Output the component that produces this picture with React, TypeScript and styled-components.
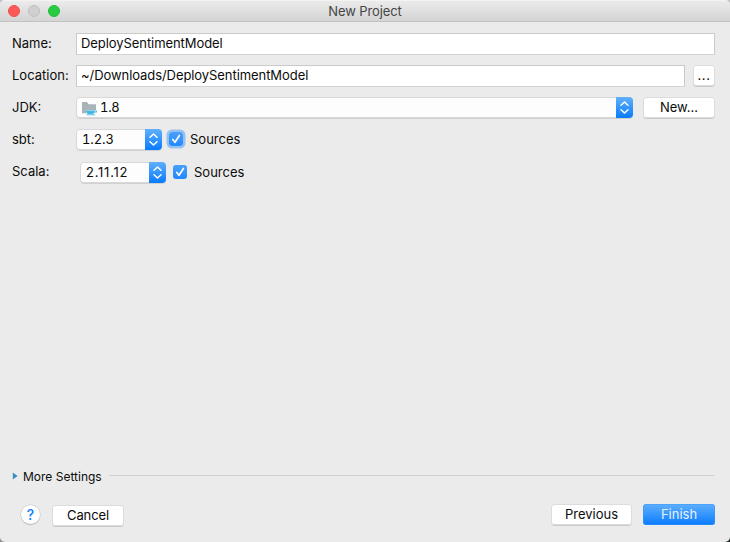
import React from 'react';
import styled, { createGlobalStyle, css } from 'styled-components';

const GlobalStyle = createGlobalStyle`
  * { box-sizing: border-box; }
  html, body { margin: 0; padding: 0; overflow: hidden; }
  body {
    background: linear-gradient(#c4c4c4 0 50%, transparent 50%),
      linear-gradient(90deg, #8c8c8c 50%, #1d2421 50%);
    font-family: Inter, 'Liberation Sans', sans-serif;
    font-size: 13px;
    color: #0c0c0c;
  }
`;

const Window = styled.main`
  width: 730px;
  height: 542px;
  display: flex;
  flex-direction: column;
  background: #ebebeb;
  border-radius: 5px;
  overflow: hidden;
`;

const TitleBar = styled.header`
  height: 22px;
  flex: none;
  display: grid;
  grid-template-columns: 80px 1fr 80px;
  align-items: center;
  background: linear-gradient(#ebebeb, #d4d4d4);
  border-top: 1px solid #f3f3f3;
  border-bottom: 1px solid #c3c3c3;
`;

const Lights = styled.div`
  display: flex;
  gap: 8px;
  padding-left: 8px;
`;

const Light = styled.span<{ $fill: string; $edge: string }>`
  width: 12px;
  height: 12px;
  border-radius: 50%;
  background: ${(p) => p.$fill};
  border: 1px solid ${(p) => p.$edge};
`;

const Title = styled.h1`
  margin: 0;
  text-align: center;
  font-size: 13px;
  line-height: 20px;
  font-weight: 400;
  letter-spacing: -0.1px;
  color: #454545;
`;

const Form = styled.section`
  flex: 1;
  display: flex;
  flex-direction: column;
  gap: 10px;
  padding: 11px 15px 0 12px;
`;

const Row = styled.div<{ $drop?: number }>`
  display: flex;
  align-items: flex-start;
  height: 22px;
  margin-top: ${(p) => p.$drop ?? 0}px;
`;

const Label = styled.label<{ $width?: number; $lift?: number }>`
  width: ${(p) => p.$width ?? 64}px;
  flex: none;
  line-height: 20px;
  white-space: nowrap;
  margin-top: ${(p) => -(p.$lift ?? 0)}px;
`;

const TextField = styled.div`
  flex: 1;
  height: 22px;
  padding: 0 4px;
  line-height: 19px;
  background: #fff;
  border: 1px solid #cacaca;
  border-bottom-color: #d4d4d4;
  letter-spacing: -0.07px;
`;

const Button = styled.button<{ $width: number; $primary?: boolean }>`
  width: ${(p) => p.$width}px;
  height: 21px;
  flex: none;
  padding: 0 0 1px;
  border: 0;
  border-radius: 3.5px;
  font: inherit;
  line-height: 20px;
  color: #0c0c0c;
  background: #fff;
  box-shadow: inset 0 0 0 1px #dcdcdc, 0 1px 0 #cacaca;
  ${(p) =>
    p.$primary &&
    css`
      color: #e6f1ff;
      background: linear-gradient(#5fb0fd, #0a7bff);
      box-shadow: inset 0 0 0 0.5px #3b97f8;
    `}
`;

const BrowseButton = styled(Button)`
  margin-left: 8px;
  letter-spacing: 0.6px;
`;

const NewButton = styled(Button)`
  margin-left: 10px;
`;

const Combo = styled.div<{ $width?: number }>`
  ${(p) => (p.$width ? `width: ${p.$width}px; flex: none;` : 'flex: 1;')}
  height: 21px;
  display: flex;
  align-items: stretch;
  border-radius: 4px;
  background: #fdfdfd;
  box-shadow: inset 0 0 0 1px #d8d8d8, 0 1px 0 #d0d0d0;
  overflow: hidden;
`;

const ComboValue = styled.span<{ $pad: number; $spacing?: number; $tabular?: boolean }>`
  flex: 1;
  display: flex;
  align-items: center;
  gap: 2px;
  padding: 0 0 1px ${(p) => p.$pad}px;
  line-height: 20px;
  font-variant-numeric: ${(p) => (p.$tabular ? 'tabular-nums' : 'normal')};
  letter-spacing: ${(p) => p.$spacing ?? 0}px;
`;

const Stepper = styled.span`
  width: 17px;
  display: flex;
  align-items: center;
  justify-content: center;
  background: linear-gradient(#61b0fb, #087bff);
`;

const Check = styled.span<{ $focused?: boolean }>`
  width: 14px;
  height: 14px;
  flex: none;
  display: flex;
  border-radius: 3px;
  background: linear-gradient(#48a0fb, #2388fd);
  margin: 3px 7px 0 7px;
  box-shadow: ${(p) => (p.$focused ? '0 0 0 2.5px #97c1f0' : 'none')};
`;

const Spacer = styled.span`
  flex: 1;
`;

const MoreSettings = styled.div`
  height: 20px;
  display: flex;
  align-items: center;
  padding: 0 16px 0 12px;
  font-size: 12px;
`;

const MoreText = styled.span`
  margin: 0 7px 0 5px;
`;

const Rule = styled.span`
  flex: 1;
  height: 1px;
  margin-bottom: 1px;
  background: #cfcfcf;
`;

const Footer = styled.footer`
  height: 56px;
  display: flex;
  align-items: flex-start;
  padding: 18px 15px 0 21px;
`;

const HelpButton = styled.button`
  width: 19px;
  height: 19px;
  margin: 1px 12px 0 0;
  padding: 0;
  border: 0;
  border-radius: 50%;
  background: #fff;
  box-shadow: 0 0 0 0.5px #c2c2c2, 0 1px 1px #b5b5b5;
  color: #0b7bff;
  font: 500 14px/19px Inter, sans-serif;
`;

const CancelButton = styled(Button)`
  margin-top: 1px;
  letter-spacing: -0.1px;
`;

const FinishButton = styled(Button)`
  margin-left: 11px;
`;

const Arrows = () => (
  <Stepper>
    <svg width="9" height="13" viewBox="0 0 9 13" fill="none" stroke="#fff" strokeWidth="1.5" strokeLinecap="round" strokeLinejoin="round">
      <path d="M1 4.3 4.5 1l3.5 3.3M1 8.7 4.5 12 8 8.7" />
    </svg>
  </Stepper>
);

const CheckBox = ({ focused }: { focused?: boolean }) => (
  <Check $focused={focused}>
    <svg width="14" height="14" viewBox="0 0 14 14" fill="none" stroke="#fff" strokeWidth="1.7" strokeLinecap="round" strokeLinejoin="round">
      <path d="M3.8 7.4 6 10.3l4.4-6.8" />
    </svg>
  </Check>
);

const JdkIcon = () => (
  <svg width="17" height="17" viewBox="0 0 17 17">
    <path d="M1 3h5l1.5 2.2H15v6H5v3H1z" fill="#a9b3ba" />
    <path d="M4.8 11.6h11.1v2h-2.4c-.6 1-1.2 1.4-1.9 1.4H7.4c-1.4 0-2.4-1.3-2.6-3.4z" fill="#46b8e6" />
    <path d="M5.5 15.8h8.5" stroke="#58bfe8" strokeWidth="1" />
    <path d="M13.8 12.6h1" stroke="#fff" strokeWidth=".8" />
  </svg>
);

export default function App() {
  return (
    <>
      <GlobalStyle />
      <Window>
        <TitleBar>
          <Lights>
            <Light $fill="#fc5b57" $edge="#ee514c" />
            <Light $fill="#d0d0d0" $edge="#bebebe" />
            <Light $fill="#28cb41" $edge="#20bd35" />
          </Lights>
          <Title>New Project</Title>
        </TitleBar>
        <Form>
          <Row>
            <Label>Name:</Label>
            <TextField>DeploySentimentModel</TextField>
          </Row>
          <Row>
            <Label>Location:</Label>
            <TextField>~/Downloads/DeploySentimentModel</TextField>
            <BrowseButton $width={22}>...</BrowseButton>
          </Row>
          <Row>
            <Label>JDK:</Label>
            <Combo>
              <ComboValue $pad={5} $tabular $spacing={-0.3}>
                <JdkIcon />
                <span>1.8</span>
              </ComboValue>
              <Arrows />
            </Combo>
            <NewButton $width={72}>New...</NewButton>
          </Row>
          <Row>
            <Label>sbt:</Label>
            <Combo $width={86}>
              <ComboValue $pad={6} $tabular $spacing={-0.1}>1.2.3</ComboValue>
              <Arrows />
            </Combo>
            <CheckBox focused />
            <Label $width={60}>Sources</Label>
          </Row>
          <Row $drop={1}>
            <Label $width={68} $lift={1}>Scala:</Label>
            <Combo $width={86}>
              <ComboValue $pad={6} $spacing={0.75}>2.11.12</ComboValue>
              <Arrows />
            </Combo>
            <CheckBox />
            <Label $width={60}>Sources</Label>
          </Row>
        </Form>
        <MoreSettings>
          <svg width="6" height="8" viewBox="0 0 6 8">
            <path d="M.8.5 5.6 4 .8 7.5z" fill="#398fc4" />
          </svg>
          <MoreText>More Settings</MoreText>
          <Rule />
        </MoreSettings>
        <Footer>
          <HelpButton>?</HelpButton>
          <CancelButton $width={72}>Cancel</CancelButton>
          <Spacer />
          <Button $width={81}>Previous</Button>
          <FinishButton $width={72} $primary>Finish</FinishButton>
        </Footer>
      </Window>
    </>
  );
}
